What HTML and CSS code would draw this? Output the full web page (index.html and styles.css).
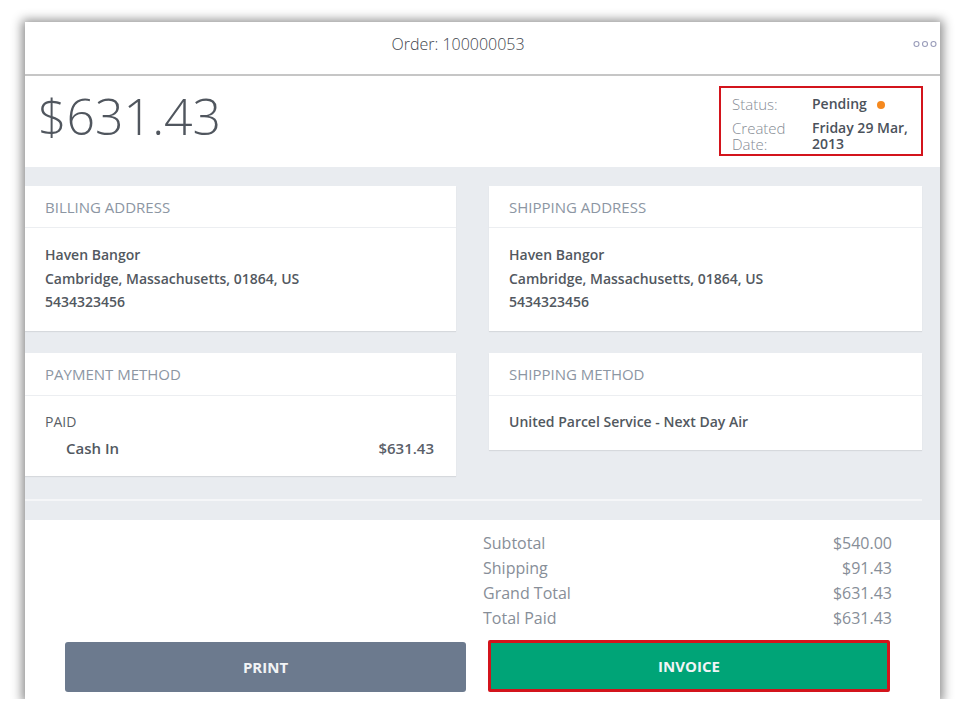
FILE: index.html
```html
<!DOCTYPE html>
<html lang="en">
<head>
<meta charset="utf-8">
<title>Order 100000053</title>
<link rel="stylesheet" href="styles.css">
</head>
<body>
<div class="page">
  <div class="window">
    <header class="topbar">
      <div class="title">Order: 100000053</div>
      <svg class="more" width="26" height="8" viewBox="0 0 26 8" aria-hidden="true">
        <circle cx="4.5" cy="4" r="2.5"/>
        <circle cx="13" cy="4" r="2.5"/>
        <circle cx="21.5" cy="4" r="2.5"/>
      </svg>
    </header>

    <section class="summary">
      <div class="amount">$631.43</div>
      <dl class="status">
        <dt class="r1">Status:</dt>
        <dd class="r1">Pending<span class="dot"></span></dd>
        <dt class="r2">Created<br>Date:</dt>
        <dd class="r2">Friday 29 Mar,<br>2013</dd>
      </dl>
    </section>

    <section class="details">
      <div class="grid">
        <div class="card">
          <div class="card-head">Billing Address</div>
          <div class="card-body">
            <div>Haven Bangor</div>
            <div>Cambridge, Massachusetts, 01864, US</div>
            <div>5434323456</div>
          </div>
        </div>
        <div class="card">
          <div class="card-head">Shipping Address</div>
          <div class="card-body">
            <div>Haven Bangor</div>
            <div>Cambridge, Massachusetts, 01864, US</div>
            <div>5434323456</div>
          </div>
        </div>
        <div class="card">
          <div class="card-head tall">Payment Method</div>
          <div class="card-body pay">
            <div class="paid">PAID</div>
            <div class="pay-row"><span>Cash In</span><span class="pay-amt">$631.43</span></div>
          </div>
        </div>
        <div class="card">
          <div class="card-head tall">Shipping Method</div>
          <div class="card-body ship">
            <div>United Parcel Service - Next Day Air</div>
          </div>
        </div>
      </div>
      <div class="divider"></div>
    </section>

    <section class="bottom">
      <div class="totals">
        <div class="trow"><span>Subtotal</span><span>$540.00</span></div>
        <div class="trow"><span>Shipping</span><span>$91.43</span></div>
        <div class="trow"><span>Grand Total</span><span>$631.43</span></div>
        <div class="trow"><span>Total Paid</span><span>$631.43</span></div>
      </div>
      <div class="actions">
        <button class="btn print">PRINT</button>
        <button class="btn invoice">INVOICE</button>
      </div>
    </section>
  </div>
</div>
</body>
</html>
```
FILE: styles.css
```css
* { box-sizing: border-box; }

body {
  margin: 0;
  background: #ffffff;
  font-family: "Open Sans", "Liberation Sans", sans-serif;
}

.page {
  padding: 22px 0 0 25px;
}

.window {
  width: 915px;
  height: 677px;
  background: #ffffff;
  box-shadow: 0 1px 10px 3px rgba(0, 0, 0, 0.45);
  display: flex;
  flex-direction: column;
  overflow: hidden;
}

/* top bar */
.topbar {
  height: 54px;
  border-bottom: 2px solid #c6c6c6;
  display: flex;
  align-items: center;
  padding: 0 2px 8px 0;
}

.title {
  flex: 1;
  text-align: center;
  padding-right: 21px;
  font-size: 16px;
  font-weight: 300;
  color: #3f454d;
}

.more {
  display: block;
  fill: none;
  stroke: #9a9dba;
  stroke-width: 1.1;
}

/* summary */
.summary {
  display: flex;
  justify-content: space-between;
  align-items: flex-start;
  padding: 10px 17px 11px 13px;
}

.amount {
  font-size: 50px;
  font-weight: 300;
  line-height: 68px;
  margin-top: -4px;
  color: #50565e;
}

.status {
  width: 204px;
  margin: 0;
  border: 2px solid #d3141c;
  padding: 6px 6px 2px 11px;
  display: grid;
  grid-template-columns: 80px 1fr;
  row-gap: 6px;
}

.status dt {
  font-size: 15px;
  font-weight: 300;
  color: #858b94;
}

.status dd {
  margin: 0;
  font-size: 14px;
  font-weight: 600;
  color: #4b525b;
}

.status .r1 { line-height: 20px; }
.status .r2 { line-height: 16px; }

.dot {
  display: inline-block;
  width: 8px;
  height: 8px;
  border-radius: 50%;
  background: #f5891f;
  margin-left: 10px;
  vertical-align: 0;
}

/* details */
.details {
  background: #e9ecf0;
  padding: 19px 18px 19px 0;
}

.grid {
  display: grid;
  grid-template-columns: 431px 433px;
  column-gap: 33px;
  row-gap: 22px;
  align-items: start;
}

.card {
  background: #ffffff;
  box-shadow: 0 1px 1px rgba(0, 0, 0, 0.08);
}

.card-head {
  height: 42px;
  line-height: 42px;
  padding: 0 20px;
  border-bottom: 1px solid #eceef1;
  font-size: 15px;
  color: #8c96a3;
  text-transform: uppercase;
}

.card-head.tall {
  height: 43px;
  line-height: 43px;
}

.card-body {
  padding: 15px 20px 17px;
  font-size: 14px;
  font-weight: 600;
  line-height: 23.5px;
  color: #525860;
}

.card-body.pay {
  padding: 16px 22px 16px 20px;
}

.paid {
  font-size: 14px;
  font-weight: 400;
  line-height: 20px;
  color: #5a5f66;
}

.pay-row {
  display: flex;
  justify-content: space-between;
  margin-top: 4px;
  padding-left: 21px;
  font-size: 15px;
  line-height: 24px;
}

.pay-amt {
  color: #5a6069;
}

.card-body.ship {
  padding: 14px 20px 17px;
}

.divider {
  margin-top: 23px;
  height: 2px;
  background: #f5f6f8;
}

/* bottom */
.bottom {
  flex: 1;
  padding: 11px 0 6px 40px;
}

.totals {
  margin-left: 418px;
  width: 409px;
}

.trow {
  display: flex;
  justify-content: space-between;
  font-size: 16px;
  font-weight: 400;
  line-height: 25px;
  color: #878e98;
}

.actions {
  display: flex;
  align-items: flex-end;
  gap: 22px;
  margin-top: 9px;
}

.btn {
  font-family: "Open Sans", "Liberation Sans", sans-serif;
  font-size: 15px;
  font-weight: 700;
  color: #f2f4f6;
  border: none;
  padding: 0;
}

.print {
  width: 401px;
  height: 50px;
  border-radius: 3px;
  background: #6c7a8e;
}

.invoice {
  width: 402px;
  height: 52px;
  border-radius: 2px;
  background: #00a477;
  border: 3px solid #d3141c;
}
```
